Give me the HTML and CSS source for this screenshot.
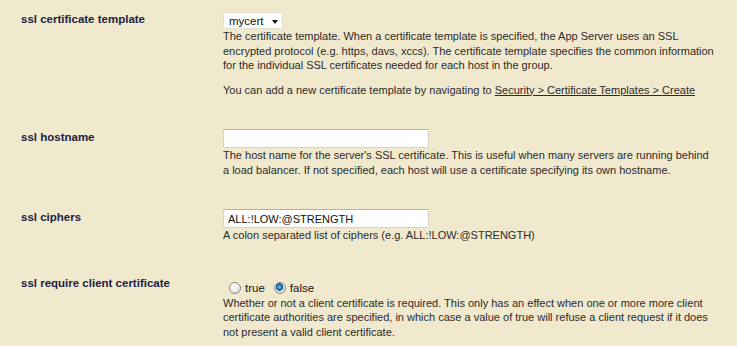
FILE: index.html
```html
<!DOCTYPE html>
<html lang="en">
  <head>
    <meta charset="UTF-8" />
    <title>SSL settings</title>
    <link rel="stylesheet" href="styles.css">
  </head>
  <body>
    <div class="form">
      <div class="row">
        <div class="label">ssl certificate template</div>
        <div class="field">
          <div class="select">mycert <span class="caret"></span></div>
          <p class="help">The certificate template. When a certificate template is specified, the App Server uses an SSL encrypted protocol (e.g. https, davs, xccs). The certificate template specifies the common information for the individual SSL certificates needed for each host in the group.</p>
          <p class="help">You can add a new certificate template by navigating to <a href="#">Security &gt; Certificate Templates &gt; Create</a></p>
        </div>
      </div>
      <div class="row">
        <div class="label">ssl hostname</div>
        <div class="field">
          <input class="text" type="text" value="">
          <p class="help">The host name for the server's SSL certificate. This is useful when many servers are running behind a load balancer. If not specified, each host will use a certificate specifying its own hostname.</p>
        </div>
      </div>
      <div class="row">
        <div class="label">ssl ciphers</div>
        <div class="field">
          <input class="text" type="text" value="ALL:!LOW:@STRENGTH">
          <p class="help">A colon separated list of ciphers (e.g. ALL:!LOW:@STRENGTH)</p>
        </div>
      </div>
      <div class="row">
        <div class="label">ssl require client certificate</div>
        <div class="field">
          <div class="radios">
            <label><input type="radio" name="req"> true</label>
            <label><input type="radio" name="req" checked> false</label>
          </div>
          <p class="help">Whether or not a client certificate is required. This only has an effect when one or more more client certificate authorities are specified, in which case a value of true will refuse a client request if it does not present a valid client certificate.</p>
        </div>
      </div>
    </div>
  </body>
</html>
```

FILE: styles.css
```css
:root {
  --bg: #f1e9cd;
  --label: #1b2142;
  --text: #2b2b2b;
  --font: 'Liberation Sans', Arial, sans-serif;
}
html, body {
  margin: 0;
  background: var(--bg);
  font-family: var(--font);
  color: var(--text);
}
.form { padding: 11px 21px 0; }
.row {
  display: grid;
  grid-template-columns: 202px 1fr;
  padding-bottom: 32px;
}
.label {
  font-size: 11.5px;
  font-weight: bold;
  color: var(--label);
  line-height: 15px;
  padding-top: 1px;
}
.field { font-size: 11px; }
.help { margin: 0 0 10px; line-height: 14.5px; }
.help:last-child { margin-bottom: 0; }
.help a { color: var(--text); }
.select {
  display: inline-flex;
  align-items: center;
  gap: 8px;
  height: 17px;
  width: 60px;
  padding: 0 5px;
  margin-top: 1px;
  background: #fff;
  border: 1px solid #e4e0d0;
  box-sizing: border-box;
  font-size: 11.5px;
  color: #111;
}
.caret {
  width: 0; height: 0;
  border-left: 3.5px solid transparent;
  border-right: 3.5px solid transparent;
  border-top: 4px solid #111;
  margin-top: 2px;
}
.text {
  display: block;
  width: 206px;
  height: 19px;
  box-sizing: border-box;
  margin: 0;
  padding: 0 4px;
  border: 1px solid #d6d2c4;
  border-top-color: #b5b2a8;
  border-radius: 2px;
  background: #fff;
  font-family: var(--font);
  font-size: 11px;
  color: #111;
}
.radios {
  display: flex;
  gap: 9px;
  padding: 6px 0 0 6px;
  line-height: 15px;
  font-size: 11.5px;
  color: #111;
}
.radios label { display: flex; align-items: center; gap: 4px; }
.radios input {
  appearance: none;
  margin: 0;
  width: 12px; height: 12px;
  border-radius: 50%;
  border: 1px solid #8a8a86;
  background: radial-gradient(circle at 40% 35%, #fff 0%, #e8e8e4 60%, #c9c9c4 100%);
  box-sizing: border-box;
}
.radios input:checked {
  background: radial-gradient(circle at 45% 40%, #7fc3ee 0, #1a6fb5 2.5px, #0c4c86 3.5px, #e8e8e4 4px, #c9c9c4 100%);
}
```
